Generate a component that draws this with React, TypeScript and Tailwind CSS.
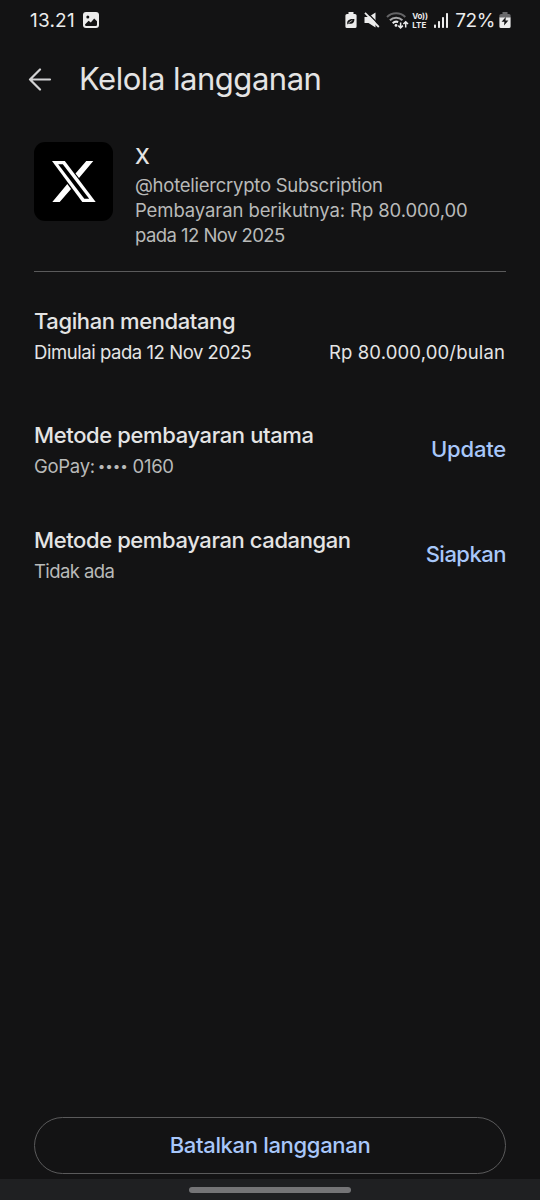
import React from 'react';

interface PaymentMethodProps {
    title: string;
    value: React.ReactNode;
    action: string;
    titleClass: string;
    valueClass: string;
    actionClass: string;
}

function StatusBar() {
    return (
        <div className="flex h-10 items-center justify-between pl-[30px] pr-[29px] text-[#ececec]">
            <div className="flex items-center gap-[8px]">
                <span className="text-[19px] leading-none tracking-[0.2px]">13.21</span>
                <svg width="16" height="16" viewBox="0 0 16 16">
                    <rect width="16" height="16" rx="3" fill="#ececec" />
                    <circle cx="4.8" cy="5" r="1.5" fill="#131314" />
                    <path d="M2 12.5 5.6 8.8l2.2 1.8 3.4-4.2L14 9.2v3.3a1.4 1.4 0 0 1-1.4 1.5H3.4A1.4 1.4 0 0 1 2 12.5Z" fill="#131314" />
                </svg>
            </div>

            <div className="flex items-center">
                {/* Power saving battery */}
                <svg width="12" height="16" viewBox="0 0 12 16">
                    <path d="M3.5 0h5v2H10a1.6 1.6 0 0 1 1.6 1.6v10.8A1.6 1.6 0 0 1 10 16H2A1.6 1.6 0 0 1 .4 14.4V3.6A1.6 1.6 0 0 1 2 2h1.5Z" fill="#ececec" />
                    <path d="M2.2 11.4c-.2-3.2 2.3-4.8 7.2-4.4.2 3.8-2.4 5.7-5.6 4.4l-1.1 1.1Z" fill="#131314" />
                    <path d="m3.4 11 4-2.7" stroke="#ececec" strokeWidth=".7" />
                </svg>
                {/* Muted */}
                <svg className="ml-[7px]" width="16" height="16" viewBox="0 0 16 16">
                    <path d="M.5 5h4L11.5.5v15L4.5 11h-4Z" fill="#ececec" />
                    <path d="m3 .3 13 13.4" stroke="#131314" strokeWidth="1.3" />
                    <path d="m1 .8 13.8 14.2" stroke="#ececec" strokeWidth="1.8" />
                </svg>
                {/* Wi-Fi */}
                <svg className="ml-[6px]" width="23" height="17" viewBox="0 0 23 17" fill="none">
                    <path d="M1 5a13 13 0 0 1 18.3 0" stroke="#646466" strokeWidth="2" />
                    <path d="M3.9 8.2a9 9 0 0 1 12.5 0" stroke="#a5a5a7" strokeWidth="2" />
                    <path d="M6.7 11.2a5.3 5.3 0 0 1 5.5-1.2" stroke="#ececec" strokeWidth="2" />
                    <circle cx="10" cy="13.4" r="1.4" fill="#ececec" />
                    <path d="M14.6 10.5v5.3m-2.3-2.2 2.3 2.3 2.3-2.3M19.7 15.5V9.700m-2.3 2.3 2.3-2.3 2.3 2.3" stroke="#ececec" strokeWidth="1.5" />
                </svg>
                <div className="ml-[3px] flex w-[17px] flex-col gap-px text-[8px] font-bold leading-[8px]">
                    <span className="tracking-[-0.2px]">Vo))</span>
                    <span className="tracking-[0.1px]">LTE</span>
                </div>
                {/* Signal */}
                <svg className="ml-[5px]" width="14" height="15" viewBox="0 0 14 15" fill="#ececec">
                    <rect x="0" y="11.5" width="2" height="3.5" rx=".7" />
                    <rect x="4" y="8" width="2" height="7" rx=".7" />
                    <rect x="8" y="4" width="2" height="11" rx=".7" />
                    <rect x="12" y="0" width="2" height="15" rx=".7" />
                </svg>
                <span className="ml-[7px] text-[19px] leading-none tracking-[-0.4px]">72%</span>
                {/* Charging battery */}
                <svg className="ml-[4px]" width="12" height="16" viewBox="0 0 12 16">
                    <path d="M3.5 0h5v2H10a1.6 1.6 0 0 1 1.6 1.6V6H.4V3.6A1.6 1.6 0 0 1 2 2h1.5Z" fill="#6a6a6c" />
                    <path d="M.4 5.5h11.2v8.9A1.6 1.6 0 0 1 10 16H2a1.6 1.6 0 0 1-1.6-1.6Z" fill="#ececec" />
                    <path d="M6.8 5 2.6 9.8h2.8L5 13.5l4.4-5H6.5Z" fill="#131314" />
                </svg>
            </div>
        </div>
    );
}

function AppBar() {
    return (
        <header className="flex h-20 items-center pl-7">
            <svg width="24" height="24" viewBox="0 0 24 24" fill="none" stroke="#d2d2d3" strokeWidth="2.2" strokeLinecap="round" strokeLinejoin="round">
                <path d="M22 11.5H2M12 1.5 2 11.5l10 10" />
            </svg>
            <h1 className="-mt-[3px] ml-[27px] text-[31px] leading-none tracking-[-0.48px]">Kelola langganan</h1>
        </header>
    );
}

function XLogo() {
    return (
        <div className="flex size-[79px] shrink-0 items-center justify-center rounded-[11px] bg-black">
            <svg width="44" height="41" viewBox="0 0 44 41">
                <path d="M0 0h12.8L43.7 41H30.3Z" fill="#fff" />
                <path d="M34.3 0H41.3L27 17l-3.5-4.6ZM.3 41h7.4L19 28l-3.7-5Z" fill="#fff" />
                <path d="M6.2 3.2h4.6l26.400 34.6h-4.9Z" fill="#000" />
            </svg>
        </div>
    );
}

function PaymentMethod({ title, value, action, titleClass, valueClass, actionClass }: PaymentMethodProps) {
    return (
        <section className="flex h-[60px] items-center justify-between">
            <div>
                <h2 className={`text-[22px] font-medium leading-[30px] ${titleClass}`}>{title}</h2>
                <p className={`mt-[2px] text-[18.5px] leading-[28px] text-[#b9bab9] ${valueClass}`}>{value}</p>
            </div>
            <button className={`-mt-[2px] text-[22px] font-medium leading-[30px] text-[#a8c7fa] ${actionClass}`}>{action}</button>
        </section>
    );
}

export default function App() {
    return (
        <div className="flex h-[1200px] w-[540px] flex-col overflow-hidden bg-[#131314] font-['Inter',sans-serif] text-[#e4e4e4]">
            <StatusBar />
            <AppBar />

            <main className="flex flex-1 flex-col px-[34px]">
                <div className="flex h-[152px] gap-[22px] border-b border-[#5a5a5b] pt-[22px]">
                    <XLogo />
                    <div className="text-[18.5px] leading-[25px] text-[#b9bab9]">
                        <h2 className="mb-[1px] text-[21px] font-medium leading-[30px] text-[#e4e4e4]">X</h2>
                        <p className="tracking-[-0.25px]">@hoteliercrypto Subscription</p>
                        <p className="tracking-[-0.1px]">Pembayaran berikutnya: Rp 80.000,00</p>
                        <p className="tracking-[-0.55px]">pada 12 Nov 2025</p>
                    </div>
                </div>

                <section className="mt-[34px]">
                    <h2 className="text-[22px] font-medium leading-[30px] tracking-[-0.4px]">Tagihan mendatang</h2>
                    <div className="mt-[2px] flex justify-between text-[18.5px] leading-[28px]">
                        <span className="tracking-[-0.45px]">Dimulai pada 12 Nov 2025</span>
                        <span className="pr-[1px] tracking-[0.15px]">Rp 80.000,00/bulan</span>
                    </div>
                </section>

                <div className="mt-[54px] flex flex-col gap-[45px]">
                    <PaymentMethod
                        title="Metode pembayaran utama"
                        value={
                            <>
                                GoPay: <span className="-ml-[2px] align-[2px] text-[13.5px] leading-none tracking-[-0.1px]">••••</span> 0160
                            </>
                        }
                        action="Update"
                        titleClass="tracking-[-0.38px]"
                        valueClass="tracking-[-0.3px]"
                        actionClass="tracking-[-0.2px]"
                    />
                    <PaymentMethod
                        title="Metode pembayaran cadangan"
                        value="Tidak ada"
                        action="Siapkan"
                        titleClass="tracking-[-0.4px]"
                        valueClass="tracking-[-0.6px]"
                        actionClass="tracking-[-0.5px]"
                    />
                </div>

                <button className="mb-[5px] mt-auto h-[57px] rounded-full border-[1.5px] border-[#5a5a5b] text-[22px] font-medium tracking-[-0.32px] text-[#a8c7fa]">
                    Batalkan langganan
                </button>
            </main>

            <div className="flex h-[21px] justify-center bg-[#1f2022] pt-2">
                <div className="h-[6px] w-[162px] rounded-full bg-[#757577]" />
            </div>
        </div>
    );
}
